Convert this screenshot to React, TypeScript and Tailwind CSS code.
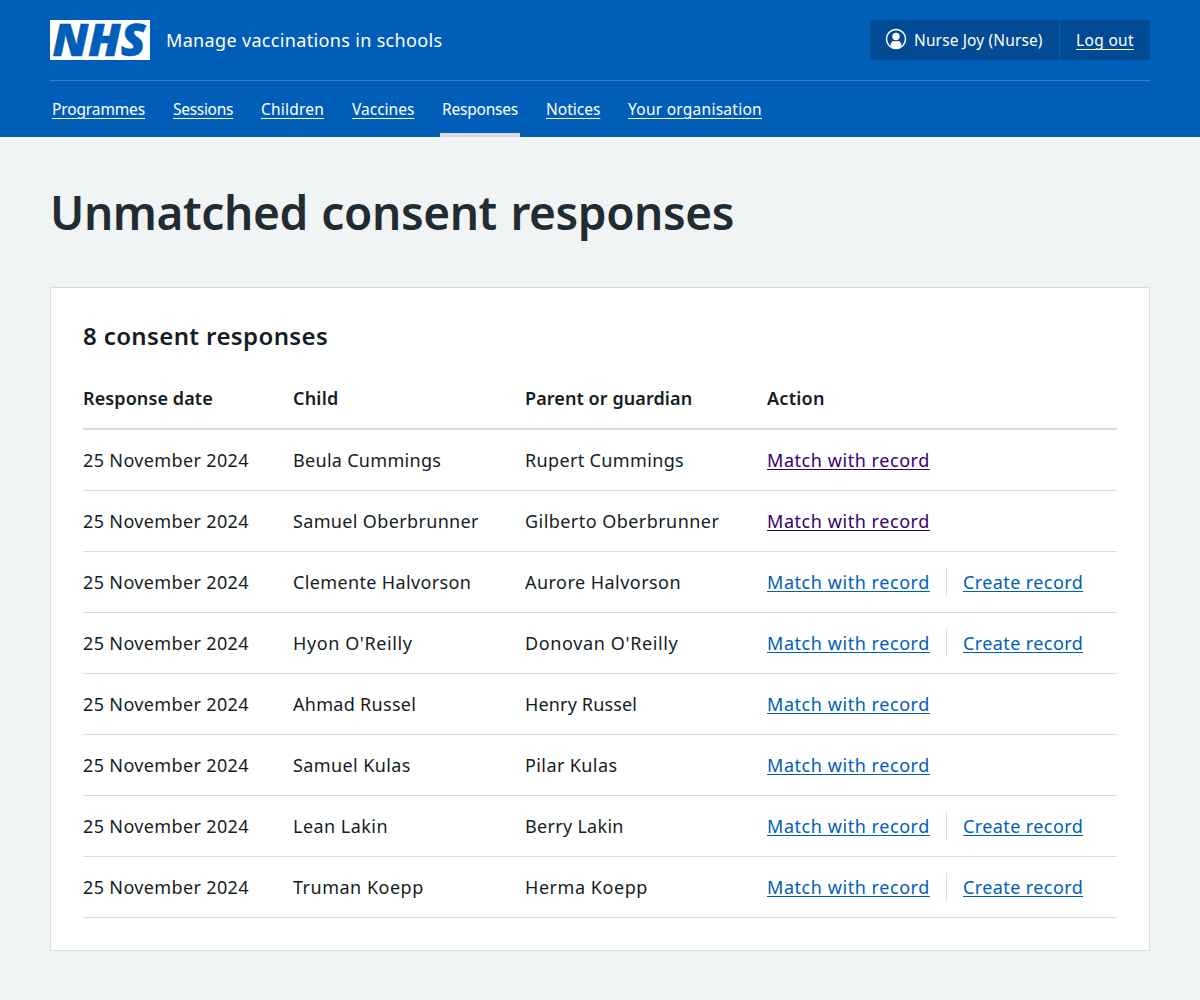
const nav = [
  { label: "Programmes", box: "w-[93px] tracking-[-0.13px]" },
  { label: "Sessions", box: "w-[60px] tracking-[-0.3px]" },
  { label: "Children", box: "w-[63px] tracking-[0.2px]" },
  { label: "Vaccines", box: "w-[62px]" },
  { label: "Responses", box: "w-[76px] tracking-[-0.2px]", current: true },
  { label: "Notices", box: "w-[54px]" },
  { label: "Your organisation", box: "w-[134px] tracking-[0.26px]" },
];

type Row = {
  child: string;
  childFit: string;
  parent: string;
  parentFit: string;
  visited?: boolean;
  create?: boolean;
};

const rows: Row[] = [
  { child: "Beula Cummings", childFit: "tracking-[0.3px]", parent: "Rupert Cummings", parentFit: "tracking-[0.35px]", visited: true },
  { child: "Samuel Oberbrunner", childFit: "tracking-[0.35px]", parent: "Gilberto Oberbrunner", parentFit: "tracking-[0.45px]", visited: true },
  { child: "Clemente Halvorson", childFit: "tracking-[0.36px]", parent: "Aurore Halvorson", parentFit: "tracking-[0.46px]", create: true },
  { child: "Hyon O'Reilly", childFit: "tracking-[0.6px]", parent: "Donovan O'Reilly", parentFit: "tracking-[0.63px]", create: true },
  { child: "Ahmad Russel", childFit: "tracking-[0.3px]", parent: "Henry Russel", parentFit: "tracking-[0.15px]" },
  { child: "Samuel Kulas", childFit: "tracking-[0.4px]", parent: "Pilar Kulas", parentFit: "tracking-[0.4px]" },
  { child: "Lean Lakin", childFit: "tracking-[0.46px]", parent: "Berry Lakin", parentFit: "tracking-[0.3px]", create: true },
  { child: "Truman Koepp", childFit: "tracking-[0.5px]", parent: "Herma Koepp", parentFit: "tracking-[0.55px]", create: true },
];

const columns = "grid grid-cols-[210px_232px_242px_1fr] whitespace-nowrap";

function Logo() {
  return (
    <svg viewBox="0 0 100 40" className="h-10 w-[100px] overflow-visible">
      <rect width="100" height="40" fill="#fff" />
      <text
        x="2.5"
        y="36"
        textLength="93"
        lengthAdjust="spacingAndGlyphs"
        fontFamily="'Open Sans', sans-serif"
        fontWeight="800"
        fontStyle="italic"
        fontSize="45"
        fill="#005eb8"
        stroke="#005eb8"
        strokeWidth="0.6"
      >
        NHS
      </text>
    </svg>
  );
}

function UserIcon() {
  return (
    <svg viewBox="0 0 22 22" className="mb-0.5 size-[22px]">
      <circle cx="11" cy="11" r="9.5" fill="none" stroke="#fff" strokeWidth="1.5" />
      <circle cx="11" cy="8.5" r="3.7" fill="#fff" />
      <path d="M5.6 18C5.6 14.6 7 12.9 8.8 12.9c1 .6 3.4.6 4.4 0 1.8 0 3.2 1.7 3.2 5.1C14.8 19.6 13 20.2 11 20.2S7.2 19.6 5.6 18Z" fill="#fff" />
    </svg>
  );
}

export default function App() {
  return (
    <div className="min-h-[1000px] bg-[#f0f4f5] font-['Noto_Sans',sans-serif] text-[#212b32]">
      <header className="flex h-[137px] flex-col bg-[#005eb8] px-[50px] text-white">
        <div className="flex h-20 shrink-0 items-center">
          <Logo />
          <span className="ml-4 text-[18px] tracking-[0.34px]">Manage vaccinations in schools</span>
          <div className="ml-auto flex h-10 rounded bg-[#004b93] text-[15.5px] leading-6">
            <div className="flex w-[189px] items-center gap-[7px] pl-[15px] tracking-[0.13px] whitespace-nowrap">
              <UserIcon />
              Nurse Joy (Nurse)
            </div>
            <div className="flex w-[91px] items-center border-l border-[#005eb8] pl-4">
              <a href="#" className="tracking-[0.33px] underline decoration-1 underline-offset-[3px]">Log out</a>
            </div>
          </div>
        </div>
        <nav className="flex h-[57px] shrink-0 gap-7 border-t border-white/20 pl-0.5 text-[15.5px] leading-[56px] whitespace-nowrap">
          {nav.map((n) =>
            n.current ? (
              <div key={n.label} className="-mx-0.5 flex h-14 border-b-4 border-[#d8dde0] px-0.5">
                <a href="#" className={n.box}>{n.label}</a>
              </div>
            ) : (
              <a key={n.label} href="#" className={`underline decoration-1 underline-offset-[3px] ${n.box}`}>{n.label}</a>
            ),
          )}
        </nav>
      </header>

      <main className="px-[50px] pt-[45px]">
        <h1 className="text-[46px] leading-[60px] font-semibold tracking-[-0.42px] [word-spacing:2px]">Unmatched consent responses</h1>

        <section className="mt-[45px] h-[664px] border border-[#d8dde0] bg-white px-8 pt-8 text-[#141d24]">
          <h2 className="text-[24px] leading-8 font-semibold tracking-[0.38px]">8 consent responses</h2>

          <div className="mt-4 text-[18px] leading-7">
            <div className={`${columns} h-[62px] border-b-2 border-[#d8dde0] pt-4 font-semibold`}>
              <div className="tracking-[0.1px]">Response date</div>
              <div className="tracking-[0.2px]">Child</div>
              <div className="tracking-[0.08px]">Parent or guardian</div>
              <div className="tracking-[0.25px]">Action</div>
            </div>
            {rows.map((r) => (
              <div key={r.child} className={`${columns} h-[61px] border-b border-[#d8dde0] pt-4`}>
                <div className="tracking-[0.36px]">25 November 2024</div>
                <div className={r.childFit}>{r.child}</div>
                <div className={r.parentFit}>{r.parent}</div>
                <div className="flex h-7">
                  <a
                    href="#"
                    className={`w-[163px] tracking-[0.56px] underline decoration-1 underline-offset-2 ${r.visited ? "text-[#330072]" : "text-[#005eb8]"}`}
                  >
                    Match with record
                  </a>
                  {r.create && (
                    <div className="ml-4 h-7 border-l border-[#d8dde0] pl-4">
                      <a href="#" className="tracking-[0.4px] text-[#005eb8] underline decoration-1 underline-offset-2">Create record</a>
                    </div>
                  )}
                </div>
              </div>
            ))}
          </div>
        </section>
      </main>
    </div>
  );
}
